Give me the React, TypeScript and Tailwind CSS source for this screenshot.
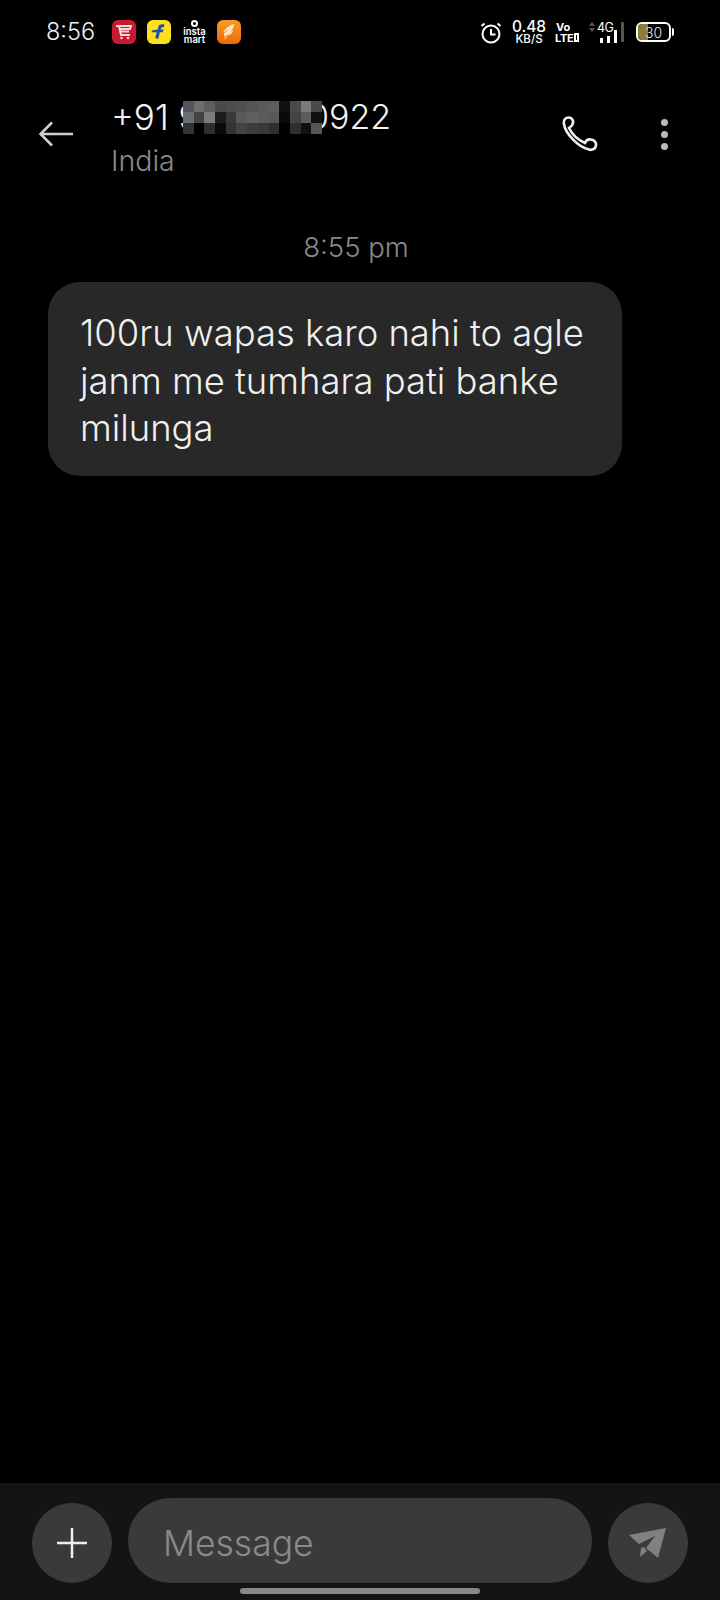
const MOSAIC = [
  ['#555555', '#6e6e6e', '#5e5e5e', '#4a4a4a', '#4e4e4e', '#505050', '#555555', '#5a5a5a', '#5e5e5e', '#111111', '#4a4a4a', '#7a7a7a', '#4a4a4a'],
  ['#6e6e6e', '#444444', '#7c7c7c', '#1c1c1c', '#3a3a3a', '#5a5a5a', '#606060', '#5a5a5a', '#585858', '#0a0a0a', '#444444', '#5c5c5c', '#111111'],
  ['#333333', '#000000', '#2e2e2e', '#0a0a0a', '#333333', '#444444', '#3c3c3c', '#383838', '#2e2e2e', '#000000', '#2e2e2e', '#111111', '#555555'],
];

function AppTiles() {
  return (
    <div className="flex items-center">
      <div className="w-6 h-6 rounded-[6px] bg-[#c8192f] flex items-center justify-center">
        <svg width="18" height="18" viewBox="0 0 18 18" fill="none" stroke="#f4d9dc" strokeWidth="2">
          <path d="M1 3h15l-1 3H4M4 3l2 9h9M5 8.500h9" />
          <circle cx="6.500" cy="15" r="1.300" fill="#f4d9dc" stroke="none" />
          <circle cx="13" cy="15" r="1.300" fill="#f4d9dc" stroke="none" />
        </svg>
      </div>
      <div className="ml-[11px] w-6 h-6 rounded-[6px] bg-[#ffe11b] flex items-center justify-center">
        <svg width="18" height="18" viewBox="0 0 18 18" fill="#1f4fa8">
          <path d="M8.500 3.500c.6-1.700 2.700-2.700 6-2l-.8 2.800c-1.500-.3-2.400 0-2.700 1L10.600 6.500h3l-.8 2.700H9.900l-1.700 6.800-3-.9L6.700 9.200H1.500l.6-1.600L7.800 6.500z" />
        </svg>
      </div>
      <div className="ml-[13px] w-[21px] h-6 flex flex-col items-center text-white font-['Inter',sans-serif] font-semibold text-[9.500px] leading-[8px]">
        <div className="w-[7px] h-[7px] rounded-full border-2 border-white mb-[1px]" />
        <span>insta</span>
        <span>mart</span>
      </div>
      <div className="ml-[12px] w-6 h-6 rounded-[6px] bg-gradient-to-b from-[#fb9a24] to-[#ea6a05] flex items-center justify-center">
        <svg width="16" height="18" viewBox="0 0 16 18" fill="#ffe9c8">
          <path d="M13.500 1C10 2 6.500 3.500 4 6.500c-.8 1-1.200 2-1.200 3L9.500 5.500 3 10.500c-.2 1 0 2 .3 3L9.500 9.500l-6 5.500.6 2c.5-2.500 2-4 4.500-5.200 2-1 3.200-2.500 3.500-4.300-1 .7-2 1-3 1.200 1.700-1 3.200-3 4.400-7.700z" />
        </svg>
      </div>
    </div>
  );
}

function StatusIcons() {
  return (
    <div className="flex items-center text-white font-['Inter',sans-serif]">
      <svg width="22" height="23" viewBox="0 0 22 23" fill="none" stroke="#fff" strokeWidth="2">
        <circle cx="11" cy="13" r="8.500" />
        <path d="M11 8v5.500h4.500M1.500 5l3-2.500M20.500 5l-3-2.500" />
      </svg>
      <div className="ml-[9px] w-[36px] flex flex-col items-center">
        <span className="text-[15.500px] leading-[13px] font-medium">0.48</span>
        <span className="mt-[2px] text-[11.500px] leading-[9px] font-medium">KB/S</span>
      </div>
      <div className="ml-[8px] w-[24px] flex flex-col font-bold text-[11px] leading-[10px]">
        <span className="pl-[1px]">Vo</span>
        <div className="mt-[1px] flex items-center tracking-[-0.3px]">
          <span>LTE</span>
          <div className="ml-[1px] w-[6px] h-[9px] border-2 border-white" />
        </div>
      </div>
      <svg className="ml-[10px] mb-[10px]" width="6" height="10" viewBox="0 0 6 10" fill="#555555">
        <path d="M3 0 6 4H0zM3 10 0 6h6z" />
      </svg>
      <div className="ml-[2px] w-[23px] flex flex-col">
        <span className="text-[12.500px] leading-[11px] tracking-[-0.5px]">4G</span>
        <div className="flex items-end gap-[4px] h-[10px] pl-[3px]">
          <div className="w-[3px] h-[5px] bg-white" />
          <div className="w-[3px] h-[7px] bg-white" />
          <div className="w-[3px] h-[13px] bg-white" />
        </div>
      </div>
      <div className="ml-[1px] w-[3px] h-5 bg-[#555555]" />
      <div className="ml-[12px] w-[35px] h-5 rounded-[6px] border-2 border-white relative overflow-hidden flex items-center justify-center text-[14px] font-light text-[#e8e8e8]">
        <div className="absolute left-0 top-0 bottom-0 w-[10px] bg-[#8f7a3a]" />
        <span className="relative">30</span>
      </div>
      <div className="ml-[1px] w-[2px] h-2 rounded-r-sm bg-white" />
    </div>
  );
}

function PhoneNumber() {
  return (
    <div className="flex items-center h-[36px] text-[35px] leading-[36px] text-[#f2f2f2] font-light whitespace-nowrap">
      <span className="w-[72px] shrink-0">+91 9</span>
      <div className="relative z-10 grid grid-cols-[repeat(13,10.700px)] grid-rows-[repeat(3,11px)] shrink-0">
        {MOSAIC.flat().map((c, i) => (
          <div key={i} style={{ backgroundColor: c }} />
        ))}
      </div>
      <span className="-ml-[14px] shrink-0 text-[34px]">0922</span>
    </div>
  );
}

export default function App() {
  return (
    <div className="w-[720px] h-[1600px] bg-black flex flex-col font-['Inter',sans-serif] overflow-hidden">
      <div className="h-[64px] pl-[46px] pr-[46px] pt-[20px] flex items-start justify-between">
        <div className="flex items-center h-6">
          <span className="w-[66px] text-[23.500px] leading-6 text-[#f0f0f0] font-light">8:56</span>
          <AppTiles />
        </div>
        <StatusIcons />
      </div>

      <header className="h-[122px] pl-[38px] pr-[52px] flex items-start">
        <svg className="mt-[57px]" width="36" height="26" viewBox="0 0 36 26" fill="none" stroke="#d0d0d0" strokeWidth="2.500">
          <path d="M35 13H3M14 1.500 2.500 13 14 24.500" />
        </svg>
        <div className="ml-[37px] mt-[35px] flex-1">
          <PhoneNumber />
          <div className="mt-[10px] text-[28.500px] leading-[32px] text-[#8a8a8a] font-light">India</div>
        </div>
        <svg className="mt-[46px]" width="50" height="48" viewBox="0 0 50 48" fill="none" stroke="#f0f0f0" strokeWidth="2.600">
          <path d="M8.800 13C8.500 9.500 11 7.500 13.500 7.500 16.500 7.500 18.500 10 18 13 17.500 16 15.500 17 14 18 17 24 23 30 30 33 31 30.500 33.500 29 36 29.500 39.500 30 41.500 32.500 41 35.500 40.500 39 37 40.500 34 39.500 24 37.500 10 24 8.800 13Z" />
        </svg>
        <div className="ml-[56px] mt-[55px] flex flex-col gap-[5px]">
          <div className="w-[7px] h-[7px] rounded-full bg-[#bbbbbb]" />
          <div className="w-[7px] h-[7px] rounded-full bg-[#bbbbbb]" />
          <div className="w-[7px] h-[7px] rounded-full bg-[#bbbbbb]" />
        </div>
      </header>

      <div className="mt-[46px] h-[30px] text-center text-[27.500px] leading-[30px] text-[#8a8a8a] font-light pr-[8px]">8:55 pm</div>

      <div className="mt-[20px] ml-[48px] w-[574px] rounded-[32px] bg-[#282828] pl-[32px] pr-[16px] pt-[28px] pb-[23px] text-[36.400px] leading-[47.500px] text-[#f0f0f0] font-light">
        100ru wapas karo nahi to agle janm me tumhara pati banke milunga
      </div>

      <div className="flex-1" />

      <div className="h-[117px] bg-[#141414] flex flex-col">
        <div className="mt-[15px] h-[85px] pl-[32px] pr-[32px] flex items-end">
          <div className="w-[80px] h-[80px] rounded-full bg-[#3a3a3a] flex items-center justify-center">
            <svg width="32" height="32" viewBox="0 0 32 32" stroke="#f0f0f0" strokeWidth="2.500">
              <path d="M1 16h30M16 1v30" />
            </svg>
          </div>
          <div className="ml-[16px] w-[464px] h-[85px] rounded-[42px] bg-[#3a3a3a] pl-[35px] pt-[6px] flex items-center text-[35.500px] text-[#8a8a8a] font-light">
            Message
          </div>
          <div className="ml-[16px] w-[80px] h-[80px] rounded-full bg-[#3a3a3a] flex items-center justify-center">
            <svg width="56" height="50" viewBox="0 0 56 50" fill="#808080">
              <path d="M9 17 46 10 38 40 26 30 35 18 19 26Z" />
              <path d="M21 30 24 29 27 33 20 39Z" />
            </svg>
          </div>
        </div>
        <div className="mt-[5px] mx-auto w-[240px] h-[6px] rounded-full bg-[#888888]" />
      </div>
    </div>
  );
}
